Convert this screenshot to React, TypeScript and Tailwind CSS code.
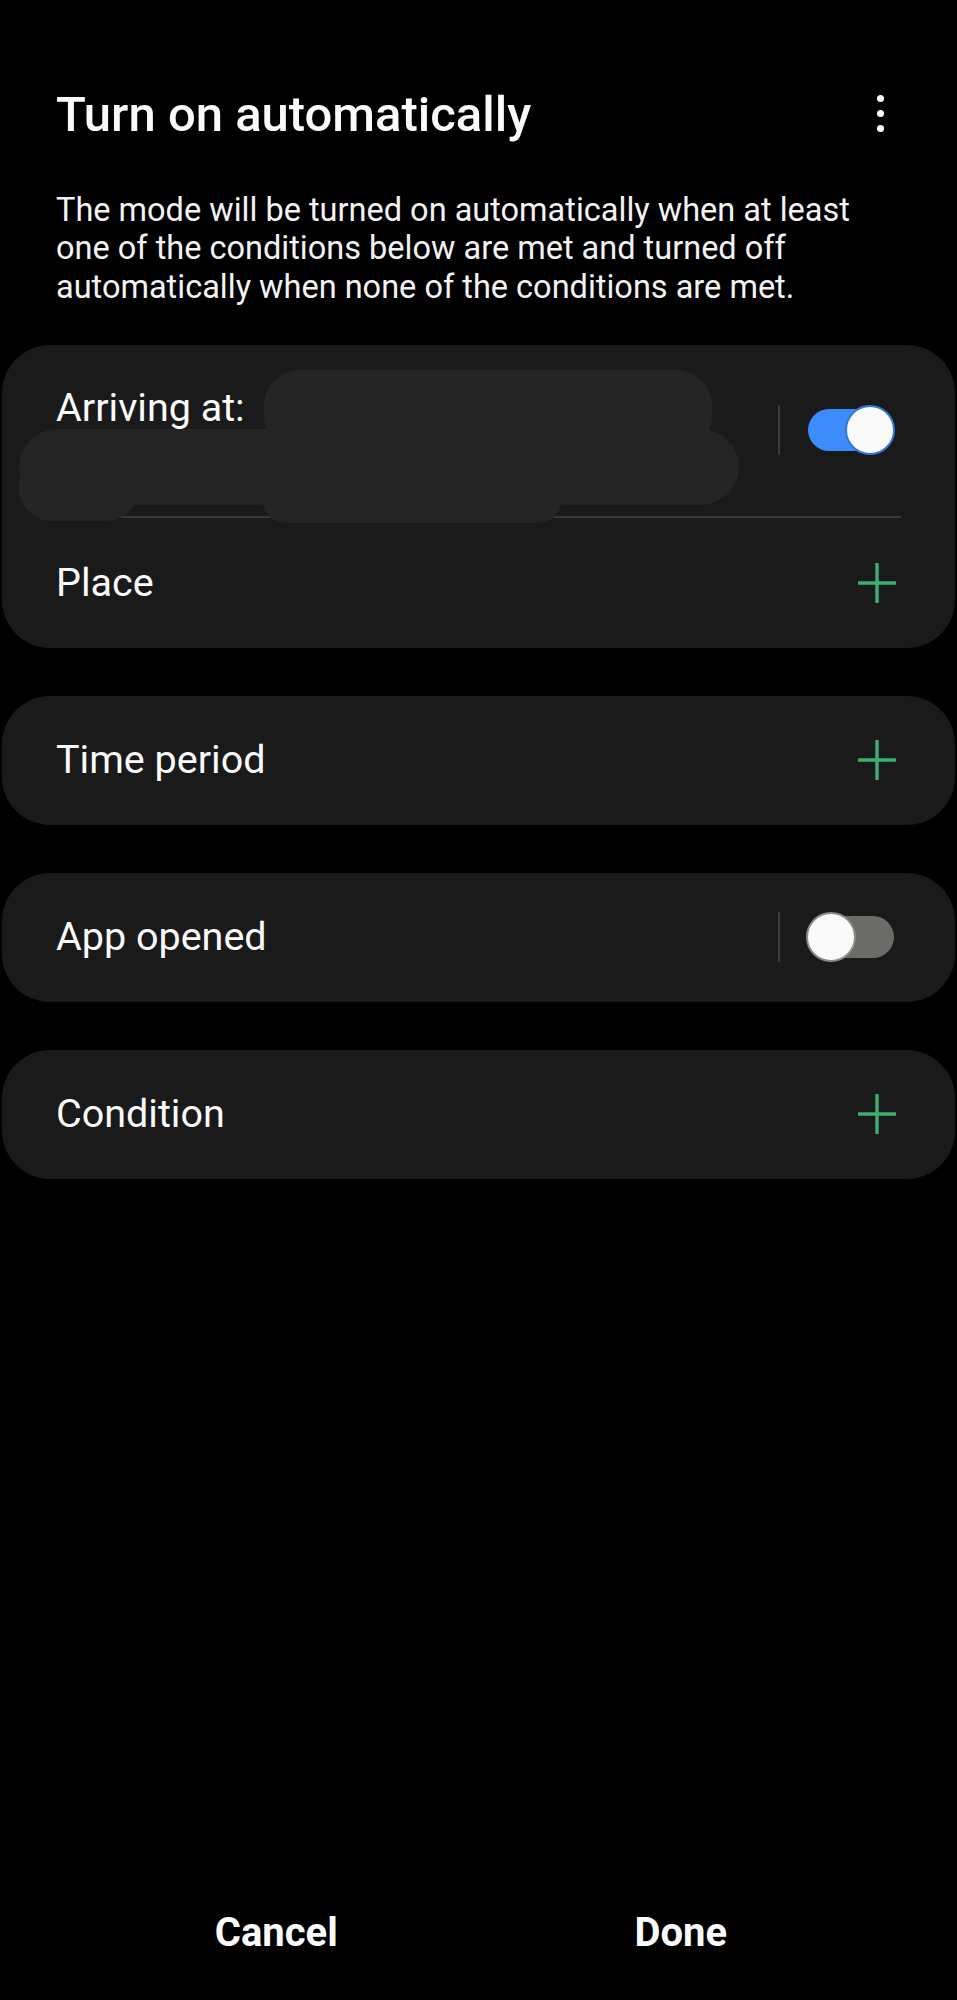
import React from 'react';

const font = { fontFamily: 'Roboto, "Noto Sans", Arial, sans-serif' };

function PlusIcon() {
  return (
    <svg width="38" height="40" viewBox="0 0 38 40" fill="none">
      <path d="M19 1v38M1 20h36" stroke="#3bb06f" strokeWidth="3.4" strokeLinecap="round" />
    </svg>
  );
}

function Toggle({ on }: { on: boolean }) {
  return (
    <div className="flex items-center">
      <div className="w-[2px] h-[50px] bg-[#3a3a3a] mr-[28px]" />
      <div className={`relative w-[86px] h-[42px] rounded-full ${on ? 'bg-[#3e8bfb]' : 'bg-[#6b6b68]'}`}>
        {on ? (
          <div className="absolute -top-[4px] -right-[1px] w-[50px] h-[50px] rounded-full bg-[#fafafa] border-[2px] border-[#3577d8]" />
        ) : (
          <div className="absolute -top-[4px] -left-[2px] w-[50px] h-[50px] rounded-full bg-[#fafafa] border-[2px] border-[#8a8a8a]" />
        )}
      </div>
    </div>
  );
}

function SimpleCard({ label, right }: { label: string; right: React.ReactNode }) {
  return (
    <div className="mx-[2px] h-[129px] rounded-[48px] bg-[#1a1a1a] flex items-center justify-between pl-[54px] pr-[59px]">
      <span className="text-[39.5px] leading-[48px] text-[#fafafa]">{label}</span>
      {right}
    </div>
  );
}

export default function App() {
  return (
    <div className="min-h-[2000px] w-full bg-black flex flex-col text-white" style={font}>
      {/* Header */}
      <div className="px-[56px] pt-[86px] flex items-center justify-between">
        <h1 className="text-[49px] leading-[58px] font-medium text-[#fafafa]">Turn on automatically</h1>
        <div className="flex flex-col items-center gap-[8px] mr-[17px] mt-[-4px]">
          <span className="w-[7px] h-[7px] rounded-full bg-white" />
          <span className="w-[7px] h-[7px] rounded-full bg-white" />
          <span className="w-[7px] h-[7px] rounded-full bg-white" />
        </div>
      </div>

      <p className="px-[56px] mt-[47px] text-[32.5px] leading-[38.3px] text-[#f2f2f2]">
        The mode will be turned on automatically when at least
        <br />
        one of the conditions below are met and turned off
        <br />
        automatically when none of the conditions are met.
      </p>

      {/* Cards */}
      <div className="mt-[39px] flex flex-col gap-[48px]">
        <div className="relative mx-[2px] rounded-[48px] bg-[#1a1a1a] overflow-hidden">
          <div className="flex items-center justify-between pl-[54px] pr-[61px] h-[171px]">
            <div className="self-start pt-[39px] text-[39.5px] leading-[48px] text-[#fafafa]">Arriving at:</div>
            <Toggle on={true} />
          </div>
          <div className="mx-[54px] h-[2px] bg-[#383838]" />
          <div className="flex items-center justify-between pl-[54px] pr-[59px] h-[130px]">
            <span className="text-[39.5px] leading-[48px] text-[#fafafa]">Place</span>
            <PlusIcon />
          </div>
          {/* redaction blobs */}
          <div className="absolute left-[262px] top-[25px] w-[448px] h-[82px] rounded-[36px] bg-[#242424]" />
          <div className="absolute left-[17px] top-[84px] w-[720px] h-[76px] rounded-[38px] bg-[#242424]" />
          <div className="absolute left-[17px] top-[110px] w-[120px] h-[66px] rounded-[33px] bg-[#242424]" />
          <div className="absolute left-[260px] top-[130px] w-[300px] h-[48px] rounded-[24px] bg-[#242424]" />
        </div>

        <SimpleCard label="Time period" right={<PlusIcon />} />
        <SimpleCard label="App opened" right={<div className="mr-[2px]"><Toggle on={false} /></div>} />
        <SimpleCard label="Condition" right={<PlusIcon />} />
      </div>

      {/* Footer buttons */}
      <div className="mt-auto h-[134px] grid grid-cols-2 items-center px-[74px]">
        <button className="text-[40px] font-bold text-[#fafafa] text-center">Cancel</button>
        <button className="text-[40px] font-bold text-[#fafafa] text-center">Done</button>
      </div>
    </div>
  );
}
